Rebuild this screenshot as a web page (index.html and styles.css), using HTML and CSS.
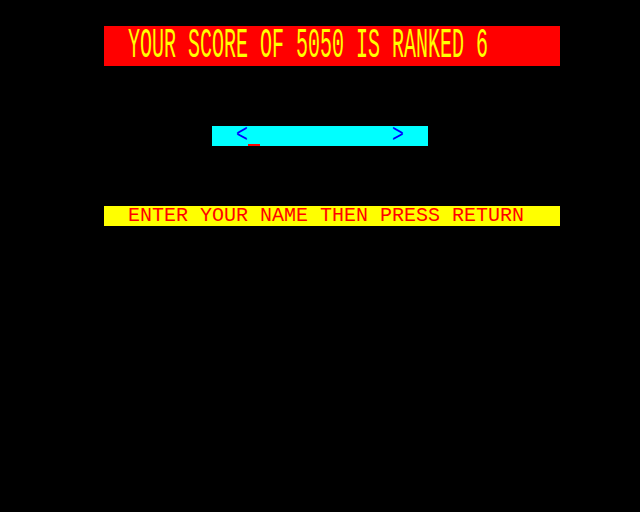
FILE: index.html
```html
<!DOCTYPE html>
<html>
<head>
<meta charset="utf-8">
<link rel="stylesheet" href="styles.css">
</head>
<body>
<div class="screen">
  <div class="bar title"><span class="dbl">YOUR SCORE OF 5050 IS RANKED 6</span></div>
  <div class="bar entry"><span class="lt">&lt;</span><span class="cursor"></span><span class="gap"></span><span class="lt">&gt;</span></div>
  <div class="bar prompt"><span>ENTER YOUR NAME THEN PRESS RETURN</span></div>
</div>
</body>
</html>
```

FILE: styles.css
```css
html, body {
  margin: 0;
  padding: 0;
  background: #000;
  width: 640px;
  height: 512px;
  overflow: hidden;
}
.screen {
  display: flex;
  flex-direction: column;
  padding: 26px 0 0 104px;
  font-family: "Liberation Mono", monospace;
  font-size: 20px;
  line-height: 20px;
  white-space: pre;
}
.bar {
  display: flex;
  height: 20px;
}
.title {
  width: 456px;
  height: 40px;
  background: #ff0000;
  color: #ffff00;
  padding-left: 24px;
  box-sizing: border-box;
}
.dbl {
  display: block;
  transform: scaleY(2.15);
  transform-origin: 0 0;
  margin-top: -1px;
}
.entry {
  width: 216px;
  margin: 60px 0 0 108px;
  background: #00ffff;
  color: #0000ff;
  padding-left: 24px;
  box-sizing: border-box;
}
.lt {
  width: 12px;
  transform: scaleY(1.3);
  transform-origin: 50% 60%;
}
.cursor {
  width: 12px;
  height: 2px;
  margin-top: 18px;
  background: #ff0000;
}
.gap {
  width: 132px;
}
.prompt {
  width: 456px;
  margin-top: 60px;
  background: #ffff00;
  color: #ff0000;
  padding-left: 24px;
  box-sizing: border-box;
}
```
